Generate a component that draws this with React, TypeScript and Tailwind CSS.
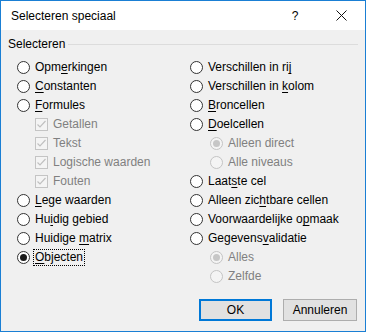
import React from 'react';

type Item = {
  pre: string;
  u: string;
  post: string;
  kind: 'radio' | 'check' | 'subradio';
  disabled?: boolean;
  checked?: boolean;
  focus?: boolean;
};

const left: Item[] = [
  { pre: 'Opm', u: 'e', post: 'rkingen', kind: 'radio' },
  { pre: '', u: 'C', post: 'onstanten', kind: 'radio' },
  { pre: '', u: 'F', post: 'ormules', kind: 'radio' },
  { pre: 'Getallen', u: '', post: '', kind: 'check', disabled: true, checked: true },
  { pre: 'Tekst', u: '', post: '', kind: 'check', disabled: true, checked: true },
  { pre: 'Logische waarden', u: '', post: '', kind: 'check', disabled: true, checked: true },
  { pre: 'Fouten', u: '', post: '', kind: 'check', disabled: true, checked: true },
  { pre: '', u: 'L', post: 'ege waarden', kind: 'radio' },
  { pre: 'Hu', u: 'i', post: 'dig gebied', kind: 'radio' },
  { pre: 'Huidige ', u: 'm', post: 'atrix', kind: 'radio' },
  { pre: '', u: 'O', post: 'bjecten', kind: 'radio', checked: true, focus: true },
];

const right: Item[] = [
  { pre: 'Verschillen in ri', u: 'j', post: '', kind: 'radio' },
  { pre: 'Verschillen in ', u: 'k', post: 'olom', kind: 'radio' },
  { pre: '', u: 'B', post: 'roncellen', kind: 'radio' },
  { pre: '', u: 'D', post: 'oelcellen', kind: 'radio' },
  { pre: 'Alleen direct', u: '', post: '', kind: 'subradio', disabled: true, checked: true },
  { pre: 'Alle niveaus', u: '', post: '', kind: 'subradio', disabled: true },
  { pre: 'Laat', u: 's', post: 'te cel', kind: 'radio' },
  { pre: 'Alleen zic', u: 'h', post: 'tbare cellen', kind: 'radio' },
  { pre: 'Voorwaardelijke o', u: 'p', post: 'maak', kind: 'radio' },
  { pre: 'Gegevens', u: 'v', post: 'alidatie', kind: 'radio' },
  { pre: 'Alles', u: '', post: '', kind: 'subradio', disabled: true, checked: true },
  { pre: 'Zelfde', u: '', post: '', kind: 'subradio', disabled: true },
];

function Radio({ checked, disabled }: { checked?: boolean; disabled?: boolean }) {
  return (
    <span
      className={
        disabled
          ? 'w-[13px] h-[13px] rounded-full border border-[#c4c4c4] bg-[#f4f4f4] flex items-center justify-center shrink-0'
          : 'w-[13px] h-[13px] rounded-full border border-[#333333] bg-white flex items-center justify-center shrink-0'
      }
    >
      {checked && (
        <span className={disabled ? 'w-[7px] h-[7px] rounded-full bg-[#c6c6c6]' : 'w-[7px] h-[7px] rounded-full bg-[#1a1a1a]'} />
      )}
    </span>
  );
}

function Check() {
  return (
    <span className="w-[13px] h-[13px] border border-[#c4c4c4] bg-[#f4f4f4] flex items-center justify-center shrink-0">
      <svg width="11" height="11" viewBox="0 0 11 11">
        <path d="M1.5 5.5 L4 8 L9.5 2" fill="none" stroke="#c0c0c0" strokeWidth="1.2" />
      </svg>
    </span>
  );
}

function Row({ item }: { item: Item }) {
  const indent = item.kind === 'check' ? 'pl-[18px]' : item.kind === 'subradio' ? 'pl-[20px]' : '';
  const text = item.disabled ? 'text-[#808080]' : 'text-black';
  return (
    <div className={`h-[19px] flex items-center ${indent}`}>
      {item.kind === 'check' ? <Check /> : <Radio checked={item.checked} disabled={item.disabled} />}
      <span
        className={`ml-[4px] px-px leading-[15px] ${text} ${
          item.focus ? 'outline outline-1 outline-dotted outline-black' : ''
        }`}
      >
        {item.pre}
        {item.u && <span className="underline underline-offset-2">{item.u}</span>}
        {item.post}
      </span>
    </div>
  );
}

export default function App() {
  return (
    <div
      className="w-[366px] h-[332px] border border-[#1a7fd4] bg-[#f0f0f0] flex flex-col text-[12px] text-black"
      style={{ fontFamily: '"Liberation Sans", Arial, sans-serif' }}
    >
      <div className="h-[29px] bg-white flex items-center pl-[10px]">
        <span className="flex-1 pt-px">Selecteren speciaal</span>
        <span className="w-[10px] text-center mr-[36px]">?</span>
        <svg width="11" height="11" viewBox="0 0 11 11" className="mr-[18px]">
          <path d="M0.5 0.5 L10.5 10.5 M10.5 0.5 L0.5 10.5" stroke="#111" strokeWidth="1" />
        </svg>
      </div>
      <div className="flex-1 flex flex-col px-[7px]">
        <div className="h-[16px] mt-[6px] flex items-center">
          <span>Selecteren</span>
          <span className="flex-1 ml-[3px] h-px bg-[#dcdcdc]" />
        </div>
        <div className="flex pl-[9px] mt-[6px]">
          <div className="w-[173px] flex flex-col">
            {left.map((it) => (
              <Row key={it.pre + it.u} item={it} />
            ))}
          </div>
          <div className="flex-1 flex flex-col">
            {right.map((it) => (
              <Row key={it.pre + it.u} item={it} />
            ))}
          </div>
        </div>
        <div className="flex justify-end gap-[11px] mt-[13px] pr-px">
          <button className="w-[73px] h-[22px] border-2 border-[#0078d7] bg-[#e1e1e1] text-black">OK</button>
          <button className="w-[74px] h-[22px] border border-[#adadad] bg-[#e1e1e1] text-black">Annuleren</button>
        </div>
      </div>
    </div>
  );
}
